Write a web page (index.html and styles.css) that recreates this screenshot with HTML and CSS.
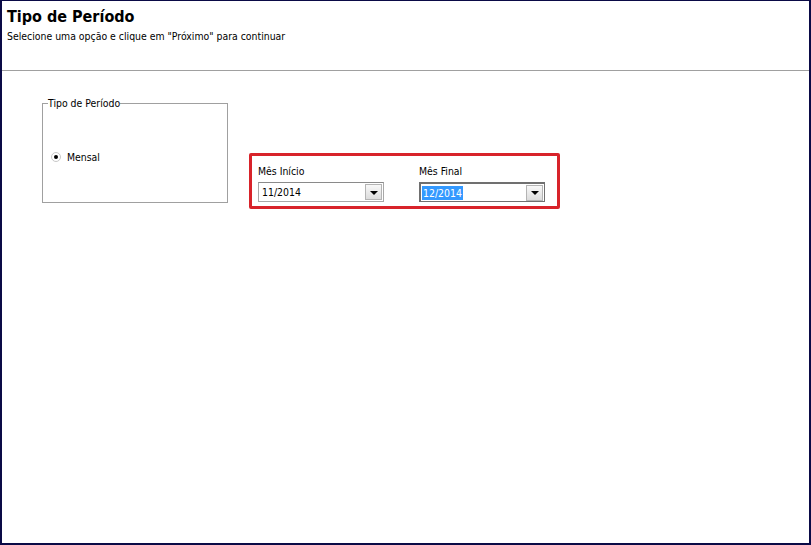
FILE: index.html
```html
<!DOCTYPE html>
<html lang="pt">
<head>
  <meta charset="UTF-8">
  <title>Tipo de Período</title>
  <link rel="stylesheet" href="styles.css">
</head>
<body>
  <div class="window">
    <div class="header">
      <h1>Tipo de Período</h1>
      <p>Selecione uma opção e clique em "Próximo" para continuar</p>
    </div>
    <div class="content">
      <fieldset class="group">
        <legend>Tipo de Período</legend>
        <label class="radio"><span class="dot"></span>Mensal</label>
      </fieldset>
      <div class="highlight">
        <div class="field">
          <span class="lbl">Mês Início</span>
          <div class="combo">
            <span class="value">11/2014</span>
            <span class="arrow"></span>
          </div>
        </div>
        <div class="field">
          <span class="lbl">Mês Final</span>
          <div class="combo focus">
            <span class="value"><span class="sel">12/2014</span></span>
            <span class="arrow"></span>
          </div>
        </div>
      </div>
    </div>
  </div>
</body>
</html>
```

FILE: styles.css
```css
html, body {
  margin: 0;
  padding: 0;
}
body {
  width: 811px;
  height: 545px;
  font-family: "DejaVu Sans Condensed", "DejaVu Sans", sans-serif;
  font-size: 10.4px;
  color: #000;
}
.window {
  box-sizing: border-box;
  width: 811px;
  height: 545px;
  border: 2px solid #0a0a46;
  border-top-width: 1px;
  background: #fff;
}
.header {
  height: 70px;
  border-bottom: 1px solid #a0a0a0;
  padding: 6px 0 0 5px;
  box-sizing: border-box;
}
.header h1 {
  margin: 0;
  font-size: 16px;
  font-weight: bold;
  line-height: 20px;
}
.header p {
  margin: 2px 0 0;
  line-height: 14px;
}
.content {
  display: flex;
  align-items: flex-start;
  padding: 26px 0 0 40px;
}
.group {
  box-sizing: border-box;
  width: 186px;
  height: 106px;
  margin: 0;
  padding: 0 0 0 8px;
  border: 1px solid #a0a0a0;
}
.group legend {
  padding: 0;
  margin-left: -3px;
  line-height: 13px;
}
.radio {
  display: flex;
  align-items: center;
  margin-top: 41px;
  gap: 6px;
}
.dot {
  box-sizing: border-box;
  width: 10px;
  height: 10px;
  border-radius: 50%;
  border: 1px solid #c8c8c8;
  display: flex;
  align-items: center;
  justify-content: center;
}
.dot::after {
  content: "";
  width: 4px;
  height: 4px;
  border-radius: 50%;
  background: #000;
}
.highlight {
  box-sizing: border-box;
  width: 311px;
  height: 56px;
  margin: 56px 0 0 21px;
  border: 3px solid #d8232a;
  border-radius: 2px;
  display: flex;
  gap: 35px;
  padding: 8px 0 0 6px;
}
.field {
  display: flex;
  flex-direction: column;
  gap: 4px;
}
.lbl {
  line-height: 14px;
}
.combo {
  box-sizing: border-box;
  width: 126px;
  height: 20px;
  border: 1px solid #a8a8a8;
  border-top-color: #8a8a8a;
  display: flex;
  align-items: center;
  justify-content: space-between;
  padding: 0 1px 0 3px;
}
.combo.focus {
  border: 1px solid #707070;
  border-left-width: 2px;
  border-top-width: 2px;
  padding-left: 1px;
}
.sel {
  background: #3399ff;
  color: #fff;
  padding: 1px 1px;
}
.arrow {
  box-sizing: border-box;
  width: 17px;
  height: 16px;
  background: linear-gradient(#f8f8f8, #dcdcdc);
  border: 1px solid #b4b4b4;
  display: flex;
  align-items: center;
  justify-content: center;
}
.arrow::after {
  content: "";
  border-left: 4px solid transparent;
  border-right: 4px solid transparent;
  border-top: 4px solid #000;
  margin-top: 1px;
}
```
